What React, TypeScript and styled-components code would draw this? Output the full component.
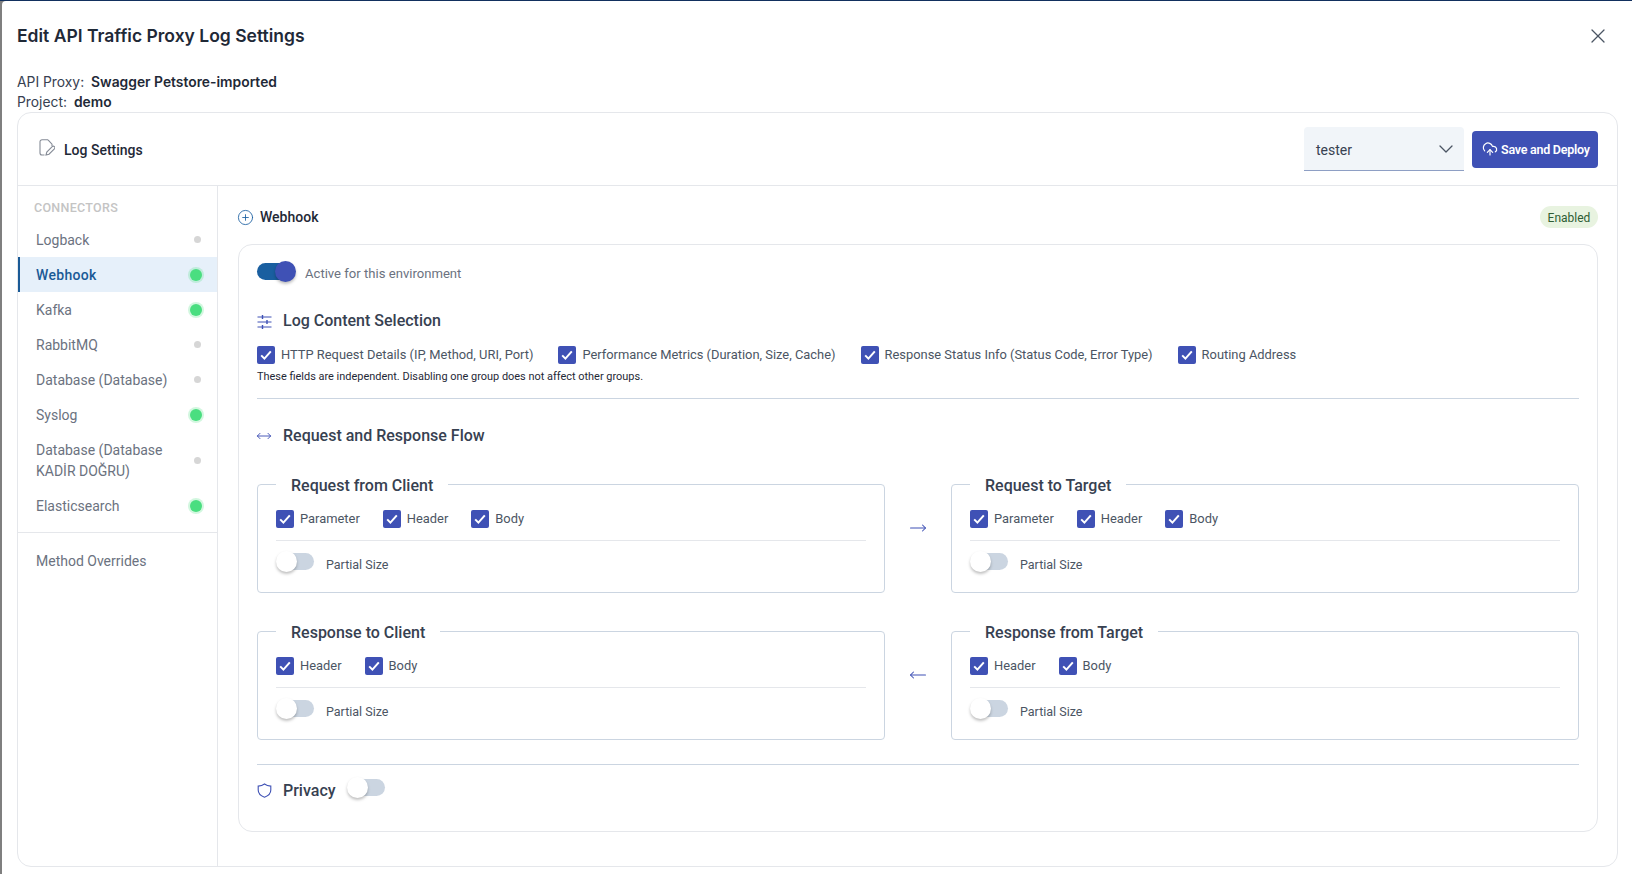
import styled, { createGlobalStyle } from "styled-components";
import {
  ChevronDown,
  CirclePlus,
  CloudUpload,
  MoveHorizontal,
  MoveLeft,
  MoveRight,
  X,
} from "lucide-react";

const connectors = [
  { name: "Logback", on: false },
  { name: "Webhook", on: true, active: true },
  { name: "Kafka", on: true },
  { name: "RabbitMQ", on: false },
  { name: "Database (Database)", on: false },
  { name: "Syslog", on: true },
  { name: "Database (Database KADİR DOĞRU)", on: false },
  { name: "Elasticsearch", on: true },
];

const contentFields = [
  "HTTP Request Details (IP, Method, URI, Port)",
  "Performance Metrics (Duration, Size, Cache)",
  "Response Status Info (Status Code, Error Type)",
  "Routing Address",
];

function Check({ label }: { label: string }) {
  return (
    <CheckLabel>
      <CheckBox>
        <svg width="12" height="12" viewBox="0 0 12 12" fill="none">
          <path d="M1.2 6.4 4.4 9.6 10.8 2.4" stroke="#fff" strokeWidth="2" />
        </svg>
      </CheckBox>
      {label}
    </CheckLabel>
  );
}

function FlowGroup({ title, fields }: { title: string; fields: string[] }) {
  return (
    <Group>
      <GroupTitle>{title}</GroupTitle>
      <GroupChecks>
        {fields.map((f) => (
          <Check key={f} label={f} />
        ))}
      </GroupChecks>
      <GroupLine />
      <ToggleRow>
        <Toggle />
        <ToggleLabel>Partial Size</ToggleLabel>
      </ToggleRow>
    </Group>
  );
}

function App() {
  return (
    <>
      <GlobalStyle />
      <Backdrop>
        <Modal>
          <TitleRow>
            <Title>Edit API Traffic Proxy Log Settings</Title>
            <CloseButton>
              <X size={24} strokeWidth={1.3} />
            </CloseButton>
          </TitleRow>
          <Meta>
            <MetaLine>
              API Proxy: <strong>Swagger Petstore-imported</strong>
            </MetaLine>
            <MetaLine>
              Project: <strong>demo</strong>
            </MetaLine>
          </Meta>
          <Card>
            <CardHeader>
              <CardTitle>
                <svg width="16" height="17" viewBox="0 0 16 17" fill="none" stroke="#858b96" strokeWidth="1.1">
                  <path d="M9 .8H3A2 2 0 0 0 1 2.8V14A2 2 0 0 0 3 16H5.5" />
                  <path d="M9 .8 13 5.2V7" />
                  <path d="M13.2 7.6 7.8 13 7 16 10 15.2 15.4 9.8A1.5 1.5 0 0 0 13.2 7.6Z" />
                </svg>
                <span>Log Settings</span>
              </CardTitle>
              <HeaderActions>
                <EnvSelect>
                  <span>tester</span>
                  <ChevronDown size={24} strokeWidth={1.3} color="#4b5563" />
                </EnvSelect>
                <SaveButton>
                  <CloudUpload size={16} strokeWidth={1.8} />
                  Save and Deploy
                </SaveButton>
              </HeaderActions>
            </CardHeader>
            <CardBody>
              <Sidebar>
                <SideTitle>CONNECTORS</SideTitle>
                {connectors.map((c) => (
                  <SideItem key={c.name} $active={c.active}>
                    <span>{c.name}</span>
                    <Dot $on={c.on} />
                  </SideItem>
                ))}
                <SideLine />
                <SideItem>
                  <span>Method Overrides</span>
                </SideItem>
              </Sidebar>
              <Main>
                <MainHeader>
                  <MainTitle>
                    <CirclePlus size={17} strokeWidth={1.2} color="#1a5fa0" />
                    Webhook
                  </MainTitle>
                  <Badge>Enabled</Badge>
                </MainHeader>
                <Panel>
                  <ActiveRow>
                    <Toggle $on />
                    <ActiveLabel>Active for this environment</ActiveLabel>
                  </ActiveRow>
                  <ContentHead>
                    <svg width="15" height="15" viewBox="0 0 15 15" fill="none" stroke="#3f51b5" strokeWidth="1">
                      <path d="M.5 3H14.5M.5 8H14.5M.5 13H14.5" />
                      <path d="M5.5 1V5M10 6V10M5.5 11V15" strokeWidth="1.4" />
                    </svg>
                    Log Content Selection
                  </ContentHead>
                  <FieldRow>
                    {contentFields.map((f) => (
                      <Check key={f} label={f} />
                    ))}
                  </FieldRow>
                  <Helper>
                    These fields are independent. Disabling one group does not affect other groups.
                  </Helper>
                  <Divider />
                  <FlowHead>
                    <MoveHorizontal size={16} strokeWidth={1.4} color="#3f51b5" />
                    Request and Response Flow
                  </FlowHead>
                  <FlowGrid>
                    <FlowGroup title="Request from Client" fields={["Parameter", "Header", "Body"]} />
                    <FlowArrow>
                      <MoveRight size={18} strokeWidth={1.4} />
                    </FlowArrow>
                    <FlowGroup title="Request to Target" fields={["Parameter", "Header", "Body"]} />
                    <FlowGroup title="Response to Client" fields={["Header", "Body"]} />
                    <FlowArrow>
                      <MoveLeft size={18} strokeWidth={1.4} />
                    </FlowArrow>
                    <FlowGroup title="Response from Target" fields={["Header", "Body"]} />
                  </FlowGrid>
                  <Divider $tight />
                  <PrivacyRow>
                    <svg width="15" height="15" viewBox="0 0 15 15" fill="none">
                      <path
                        d="M7.5 1 C9.3 2.4 11.4 3 13.8 3.1 V7 C13.8 10.6 11.2 12.9 7.5 14.2 C3.8 12.9 1.2 10.6 1.2 7 V3.1 C3.6 3 5.7 2.4 7.5 1 Z"
                        stroke="#3f51b5"
                        strokeWidth="1.1"
                      />
                    </svg>
                    <PrivacyText>Privacy</PrivacyText>
                    <PrivacyToggle>
                      <Toggle />
                    </PrivacyToggle>
                  </PrivacyRow>
                </Panel>
              </Main>
            </CardBody>
          </Card>
        </Modal>
      </Backdrop>
    </>
  );
}

export default App;

const GlobalStyle = createGlobalStyle`
  html, body, #root {
    margin: 0;
    height: 100%;
  }
  body {
    background: #7f7f7f;
    font-family: Roboto, "Noto Sans", sans-serif;
    overflow: hidden;
  }
`;

const Backdrop = styled.div`
  height: 874px;
  box-sizing: border-box;
  padding-left: 2px;
  border-top: 1px solid #12305e;
`;

const Modal = styled.div`
  height: 873px;
  box-sizing: border-box;
  background: #fff;
  border-top-left-radius: 4px;
  padding: 21px 14px 7px 15px;
  display: flex;
  flex-direction: column;
`;

const TitleRow = styled.div`
  display: flex;
  justify-content: space-between;
  align-items: center;
  height: 28px;
`;

const Title = styled.h2`
  margin: 0;
  font-family: Inter, sans-serif;
  font-size: 17.5px;
  font-weight: 600;
  line-height: 28px;
  color: #1f2937;
`;

const CloseButton = styled.span`
  display: flex;
  margin-right: 8px;
  color: #4b5563;
`;

const Meta = styled.div`
  margin-top: 22px;
`;

const MetaLine = styled.div`
  font-family: Inter, sans-serif;
  font-size: 13.85px;
  line-height: 20px;
  color: #374151;

  strong {
    margin-left: 3px;
    font-weight: 600;
    color: #1f2937;
  }
`;

const Card = styled.section`
  flex: 1;
  min-height: 0;
  display: flex;
  flex-direction: column;
  border: 1px solid #e5e7eb;
  border-radius: 14px;
`;

const CardHeader = styled.header`
  height: 73px;
  flex: none;
  box-sizing: border-box;
  border-bottom: 1px solid #e5e7eb;
  padding: 0 19px;
  display: flex;
  align-items: center;
  justify-content: space-between;
`;

const CardTitle = styled.div`
  display: flex;
  align-items: center;
  gap: 9px;
  font-size: 14px;
  font-weight: 500;
  color: #1f2937;

  svg {
    margin: -3px 0 0 2px;
  }

  span {
    margin-top: 2px;
  }
`;

const HeaderActions = styled.div`
  display: flex;
  align-items: center;
  gap: 8px;
`;

const EnvSelect = styled.div`
  width: 160px;
  height: 44px;
  box-sizing: border-box;
  padding: 0 6px 0 12px;
  display: flex;
  align-items: center;
  justify-content: space-between;
  background: #f1f5f9;
  border-bottom: 1px solid #8e9fc4;
  border-radius: 4px 4px 0 0;
  font-size: 14px;
  color: #374151;

  span {
    margin-top: 2px;
  }
`;

const SaveButton = styled.button`
  width: 126px;
  height: 37px;
  padding: 0 0 0 10px;
  display: flex;
  align-items: center;
  gap: 3px;
  border: 0;
  border-radius: 4px;
  background: #3f51b5;
  color: #fff;
  font-family: Roboto, sans-serif;
  font-size: 12.5px;
  font-weight: 600;
  letter-spacing: -0.25px;
`;

const CardBody = styled.div`
  flex: 1;
  min-height: 0;
  display: flex;
`;

const Sidebar = styled.nav`
  width: 200px;
  flex: none;
  box-sizing: border-box;
  padding-top: 14px;
  border-right: 1px solid #e5e7eb;
`;

const SideTitle = styled.div`
  padding-left: 16px;
  margin-bottom: 6px;
  font-size: 12.5px;
  letter-spacing: 0.3px;
  line-height: 16px;
  font-weight: 500;
  color: #c4c4c4;
`;

const SideItem = styled.div<{ $active?: boolean }>`
  display: flex;
  align-items: center;
  justify-content: space-between;
  gap: 12px;
  padding: 7px 16px 7px ${(p) => (p.$active ? 16 : 18)}px;
  border-left: ${(p) => (p.$active ? "2px solid #1a5a96" : "0")};
  background: ${(p) => (p.$active ? "#e6f0fa" : "transparent")};
  color: ${(p) => (p.$active ? "#1a5a96" : "#6b7280")};
  font-size: 14px;
  font-weight: ${(p) => (p.$active ? 500 : 400)};
  letter-spacing: ${(p) => (p.$active ? "0.3px" : "0")};
  line-height: 21px;

  span {
    margin: 1px 0 -1px;
  }
`;

const Dot = styled.i<{ $on?: boolean }>`
  flex: none;
  width: ${(p) => (p.$on ? 12 : 7)}px;
  height: ${(p) => (p.$on ? 12 : 7)}px;
  margin-right: ${(p) => (p.$on ? -1 : 0)}px;
  border-radius: 50%;
  background: ${(p) => (p.$on ? "#4ade80" : "#d6d6d6")};
  box-shadow: ${(p) => (p.$on ? "0 0 0 2px rgba(74, 222, 128, 0.25)" : "none")};
`;

const SideLine = styled.div`
  height: 1px;
  margin: 9px 0 10px;
  background: #e5e7eb;
`;

const Main = styled.main`
  flex: 1;
  min-width: 0;
  padding: 20px 19px 0 20px;
`;

const MainHeader = styled.div`
  height: 22px;
  margin-bottom: 16px;
  display: flex;
  align-items: center;
  justify-content: space-between;
`;

const MainTitle = styled.div`
  display: flex;
  align-items: center;
  gap: 6px;
  font-size: 14px;
  font-weight: 500;
  color: #1f2937;

  svg {
    margin-left: -1px;
  }
`;

const Badge = styled.span`
  width: 58px;
  height: 22px;
  box-sizing: border-box;
  padding-top: 2px;
  display: flex;
  align-items: center;
  justify-content: center;
  border-radius: 11px;
  background: #e8f3e0;
  color: #2f5d34;
  font-size: 12px;
`;

const Panel = styled.section`
  box-sizing: border-box;
  height: 588px;
  padding: 16px 18px 0;
  border: 1px solid #e5e7eb;
  border-radius: 14px;
`;

const ActiveRow = styled.div`
  display: flex;
  align-items: center;
  gap: 10px;
`;

const ActiveLabel = styled.span`
  margin-top: 4px;
  font-size: 13.1px;
  color: #6b7280;
`;

const SectionHead = styled.div`
  display: flex;
  align-items: center;
  gap: 11px;
  font-size: 16px;
  font-weight: 500;
  line-height: 24px;
  color: #374151;
`;

const ContentHead = styled(SectionHead)`
  margin-top: 27px;
`;

const FlowHead = styled(SectionHead)`
  margin-top: 25px;

  svg {
    margin-left: -1px;
  }
`;

const FieldRow = styled.div`
  display: flex;
  gap: 25px;
  margin-top: 13px;
`;

const CheckLabel = styled.label`
  display: inline-flex;
  align-items: center;
  gap: 6px;
  font-size: 12.9px;
  line-height: 18px;
  color: #4b5563;
`;

const CheckBox = styled.span`
  width: 18px;
  height: 18px;
  flex: none;
  display: flex;
  align-items: center;
  justify-content: center;
  border-radius: 2px;
  background: #3f51b5;
`;

const Helper = styled.div`
  margin-top: 6px;
  font-size: 10.95px;
  line-height: 14px;
  color: #1f2937;
`;

const Divider = styled.div<{ $tight?: boolean }>`
  height: 1px;
  margin-top: ${(p) => (p.$tight ? 24 : 14)}px;
  background: #cbd5e1;
`;

const FlowGrid = styled.div`
  display: grid;
  grid-template-columns: 1fr 66px 1fr;
  row-gap: 25px;
  margin-top: 22.5px;
`;

const FlowArrow = styled.div`
  display: flex;
  align-items: center;
  justify-content: center;
  padding-bottom: 8px;
  color: #3f51b5;
`;

const Group = styled.fieldset`
  min-width: 0;
  margin: 0;
  padding: 12px 18px 20px;
  border: 1px solid #cbd5e1;
  border-radius: 4px;
`;

const GroupTitle = styled.legend`
  padding: 3px 15px 0;
  font-size: 16px;
  font-weight: 500;
  line-height: 24px;
  color: #374151;
`;

const GroupChecks = styled.div`
  display: flex;
  gap: 23px;
`;

const GroupLine = styled.div`
  height: 1px;
  margin: 12px 0 10px;
  background: #e5e7eb;
`;

const ToggleRow = styled.div`
  display: flex;
  align-items: center;
  gap: 12px;
`;

const ToggleLabel = styled.span`
  margin-top: 6px;
  font-size: 12.5px;
  color: #4b5563;
`;

const Toggle = styled.span<{ $on?: boolean }>`
  position: relative;
  flex: none;
  width: 38px;
  height: 21px;
  display: block;

  &::before {
    content: "";
    position: absolute;
    left: ${(p) => (p.$on ? 0 : 1)}px;
    right: ${(p) => (p.$on ? 1 : 0)}px;
    top: 2px;
    height: 17px;
    border-radius: 9px;
    background: ${(p) => (p.$on ? "#1a5fa0" : "#cbd5e1")};
  }

  &::after {
    content: "";
    position: absolute;
    top: 0;
    left: ${(p) => (p.$on ? 18 : 0)}px;
    width: 21px;
    height: 21px;
    border-radius: 50%;
    background: ${(p) => (p.$on ? "#3f51b5" : "#fff")};
    box-shadow: 0 2px 3px rgba(0, 0, 0, 0.25);
  }
`;

const PrivacyRow = styled.div`
  margin-top: 14px;
  display: flex;
  align-items: center;
  gap: 11px;
`;

const PrivacyText = styled.span`
  font-size: 16px;
  font-weight: 500;
  line-height: 24px;
  color: #374151;
`;

const PrivacyToggle = styled.span`
  margin-top: -6px;
`;
